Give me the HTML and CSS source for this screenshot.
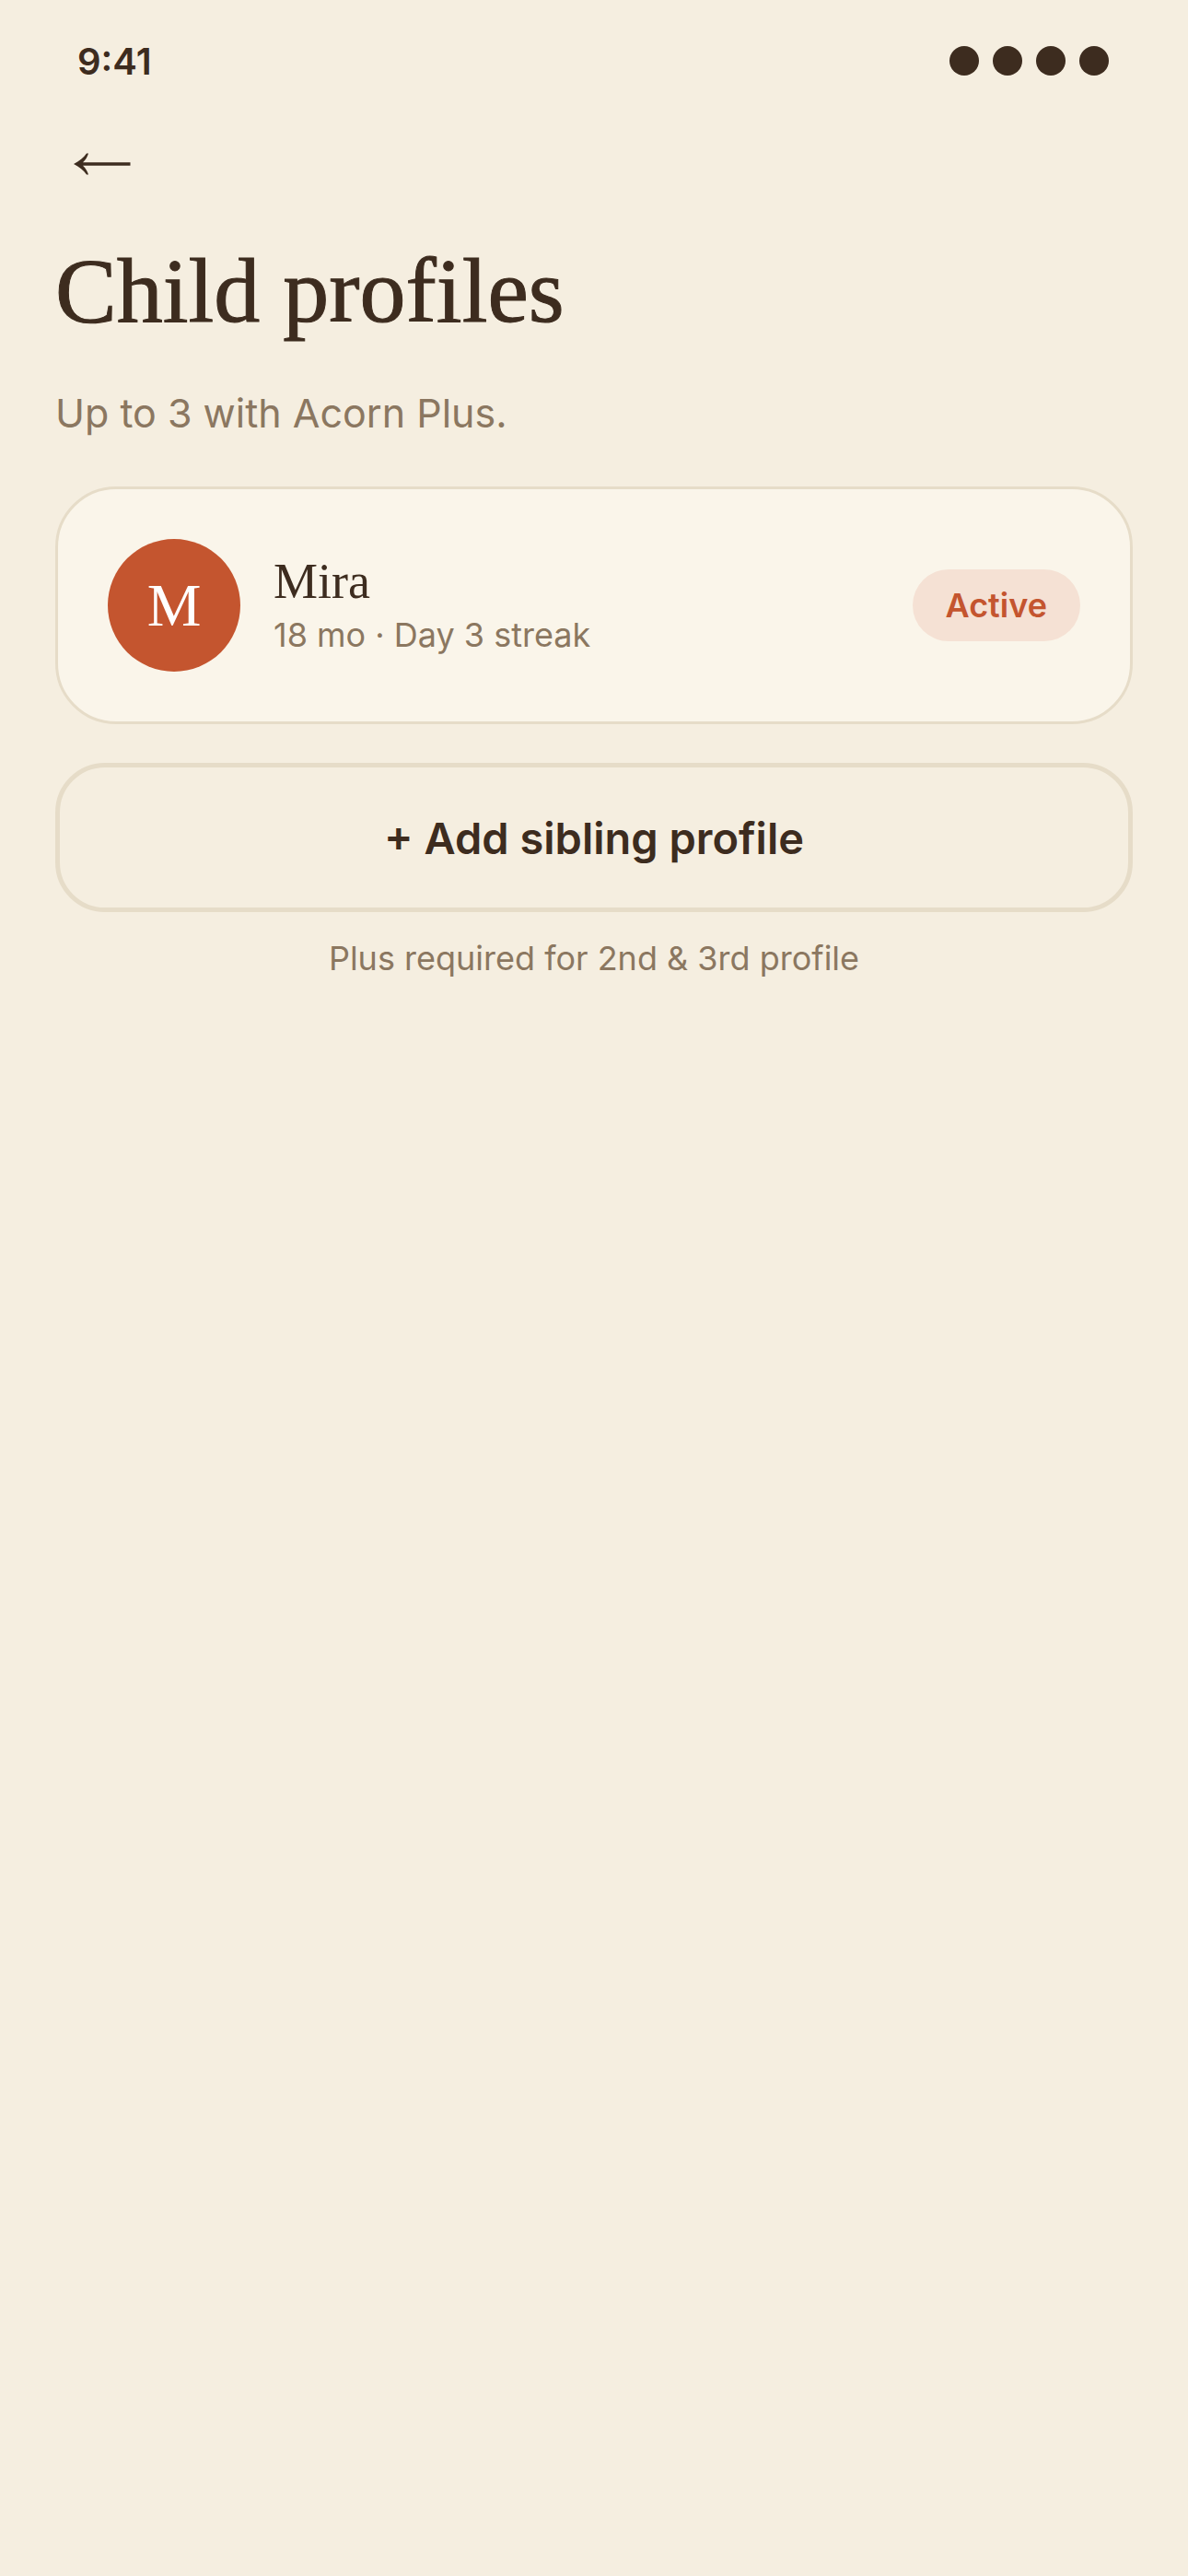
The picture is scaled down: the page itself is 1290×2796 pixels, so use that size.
FILE: index.html
```html
<!DOCTYPE html>
<html lang="en">
<head>
    <meta charset="UTF-8">
    <meta name="viewport" content="width=device-width, initial-scale=1.0">
    <title>Child profiles</title>
    <link rel="stylesheet" href="styles.css">
</head>
<body>
<header class="status-bar">
    <span class="time">9:41</span>
    <div class="dots">
        <span class="dot"></span>
        <span class="dot"></span>
        <span class="dot"></span>
        <span class="dot"></span>
    </div>
</header>
<main>
    <button type="button" class="back" aria-label="Back">
        <svg width="62" height="24" viewBox="0 0 62 24">
            <path d="M0 12C6 9 11 5 14 0.500L16 0.500C15 4 13 7.500 10 10.300H61.500V13.700H10C13 16.500 15 20 16 23.500L14 23.500C11 19 6 15 0 12Z"/>
        </svg>
    </button>
    <h1>Child profiles</h1>
    <p class="subtitle">Up to 3 with Acorn Plus.</p>

    <section class="card">
        <div class="avatar">M</div>
        <div class="info">
            <h2>Mira</h2>
            <p>18 mo · Day 3 streak</p>
        </div>
        <span class="badge">Active</span>
    </section>

    <button type="button" class="add">+ Add sibling profile</button>
    <p class="note">Plus required for 2nd &amp; 3rd profile</p>
</main>
</body>
</html>
```
FILE: styles.css
```css
* {
    box-sizing: border-box;
}
body {
    font-family: Inter, 'Liberation Sans', sans-serif;
    margin: 0;
    min-height: 100vh;
    background-color: #f5eee0;
    color: #3d2c1f;
}
h1, h2, p {
    margin: 0;
    font-weight: 400;
}
h1, h2, .avatar {
    font-family: 'Liberation Serif', serif;
}
button {
    font-family: inherit;
    color: inherit;
    background: none;
    cursor: pointer;
}
.status-bar {
    display: flex;
    justify-content: space-between;
    align-items: center;
    height: 132px;
    padding: 0 86px 0 84px;
}
.time {
    font-size: 40px;
    font-weight: 600;
}
.dots {
    display: flex;
    gap: 15px;
}
.dot {
    width: 32px;
    height: 32px;
    border-radius: 50%;
    background-color: #3d2c1f;
}
main {
    padding: 0 60px;
}
.back {
    display: flex;
    align-items: center;
    height: 92px;
    padding: 0 20px;
    border: none;
}
.back svg {
    fill: #3d2c1f;
}
h1 {
    margin-top: 32px;
    font-size: 100px;
    line-height: 120px;
    -webkit-text-stroke: 1px #3d2c1f;
}
.subtitle {
    margin: 42px 0 50px;
    font-size: 43px;
    line-height: 60px;
    color: #8b7760;
}
.card {
    display: flex;
    align-items: center;
    gap: 36px;
    padding: 54px;
    border: 3px solid #e6dcc8;
    border-radius: 66px;
    background-color: #faf5ea;
}
.avatar {
    width: 144px;
    height: 144px;
    border-radius: 50%;
    background-color: #c4552f;
    color: #fff;
    font-size: 66px;
    line-height: 144px;
    text-align: center;
}
.info {
    flex: 1;
}
.info h2 {
    margin-bottom: 4px;
    font-size: 54px;
    line-height: 60px;
}
.info p {
    font-size: 36px;
    line-height: 48px;
    color: #8b7760;
}
.badge {
    padding: 0 36px;
    border-radius: 39px;
    background-color: #f5e1d4;
    color: #c4552f;
    font-size: 36px;
    font-weight: 600;
    line-height: 78px;
}
.add {
    display: block;
    width: 100%;
    height: 162px;
    margin-top: 42px;
    border: 5px solid #e6dcc8;
    border-radius: 54px;
    font-size: 47px;
    font-weight: 600;
}
.note {
    margin-top: 26px;
    font-size: 36px;
    line-height: 48px;
    color: #8b7760;
    text-align: center;
}
```
